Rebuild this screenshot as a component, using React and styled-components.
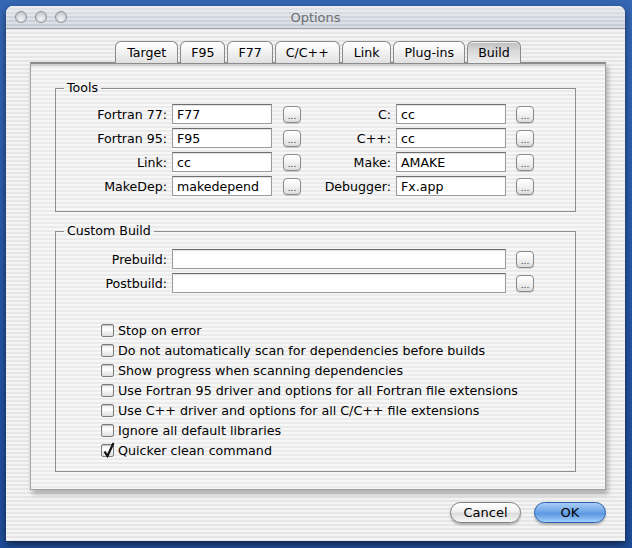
import styled, { createGlobalStyle } from 'styled-components';

const GlobalStyle = createGlobalStyle`
  html, body {
    margin: 0;
    padding: 0;
    background: #2a5aa6;
  }
  body {
    font-family: "DejaVu Sans", "Liberation Sans", sans-serif;
    font-size: 12px;
    color: #000;
  }
`;

const Desktop = styled.div`
  width: 632px;
  height: 548px;
  box-sizing: border-box;
  padding: 6px 7px 7px 6px;
  background: linear-gradient(180deg, #3566b3 0%, #2656a5 50%, #1f4c98 100%);
`;

const Window = styled.div`
  width: 619px;
  height: 535px;
  display: flex;
  flex-direction: column;
  border-radius: 7px 7px 0 0;
  overflow: hidden;
  box-shadow: 0 3px 7px rgba(0, 0, 0, 0.55);
  background: repeating-linear-gradient(180deg, #f4f4f4 0 2px, #e6e6e6 2px 4px);
`;

const TitleBar = styled.div`
  height: 22px;
  flex: none;
  display: flex;
  align-items: center;
  position: relative;
  border-bottom: 1px solid #9aa0aa;
  background:
    repeating-linear-gradient(180deg, rgba(255, 255, 255, 0.35) 0 2px, rgba(255, 255, 255, 0) 2px 4px),
    linear-gradient(180deg, #e2e5ea 0%, #cfd4dc 55%, #c3c9d3 100%);
`;

const Lights = styled.div`
  display: flex;
  gap: 8px;
  padding-left: 9px;
`;

const Light = styled.span`
  width: 12px;
  height: 12px;
  border-radius: 50%;
  box-sizing: border-box;
  border: 1px solid #8e939b;
  background: radial-gradient(circle at 50% 70%, #f4f5f7 0%, #d3d6db 55%, #b5b9c0 100%);
`;

const Title = styled.div`
  position: absolute;
  left: 0;
  right: 0;
  text-align: center;
  font-size: 13px;
  color: #6b6e73;
  pointer-events: none;
`;

const Body = styled.div`
  flex: 1;
  display: flex;
  flex-direction: column;
  padding: 12px 19px 0 24px;
`;

const TabRow = styled.div`
  display: flex;
  justify-content: center;
  gap: 2px;
  height: 22px;
  position: relative;
  z-index: 1;
  margin-bottom: -1px;
`;

const Tab = styled.div`
  height: 22px;
  box-sizing: border-box;
  padding: 0 ${p => p.$pad}px;
  display: flex;
  align-items: center;
  border: 1px solid #8a8a8a;
  border-bottom: none;
  border-radius: 6px 6px 0 0;
  font-size: 12.6px;
  background: ${p => p.$active
    ? 'linear-gradient(180deg, #bdbdbd 0%, #d8d8d8 40%, #ececec 100%)'
    : 'linear-gradient(180deg, #ffffff 0%, #f3f3f3 45%, #e0e0e0 100%)'};
  box-shadow: inset 0 1px 0 rgba(255, 255, 255, 0.8);
`;

const Panel = styled.div`
  box-sizing: border-box;
  height: 428px;
  padding: 16px 29px 0 24px;
  border: 1px solid #a0a0a0;
  border-top: 2px solid #8c8c8c;
  box-shadow: 2px 4px 5px rgba(0, 0, 0, 0.28), inset 0 4px 0 -2px #cfcfcf;
  background: repeating-linear-gradient(180deg, #f7f7f7 0 2px, #ebebeb 2px 4px);
  display: flex;
  flex-direction: column;
  gap: 11px;
`;

const Group = styled.fieldset`
  margin: 0;
  padding: ${p => p.$pt}px 0 ${p => p.$pb}px 0;
  border: 1px solid #8e8e8e;
  min-width: 0;
`;

const Legend = styled.legend`
  margin-left: 8px;
  padding: 0 3px;
  line-height: 16px;
  font-size: 12.6px;
`;

const Rows = styled.div`
  display: flex;
  flex-direction: column;
  gap: 4px;
`;

const Row = styled.div`
  display: flex;
  align-items: center;
  height: 20px;
`;

const Label = styled.span`
  width: ${p => p.$w}px;
  box-sizing: border-box;
  padding-right: 5px;
  text-align: right;
  white-space: nowrap;
  font-size: 12.6px;
`;

const TextField = styled.div`
  width: ${p => p.$w}px;
  height: 20px;
  box-sizing: border-box;
  border: 1px solid #9b9b9b;
  border-top-color: #6e6e6e;
  box-shadow: inset 0 1px 1px rgba(0, 0, 0, 0.12);
  background: #fff;
  padding-left: 4px;
  display: flex;
  align-items: center;
  font-size: 12.6px;
`;

const Browse = styled.div`
  width: 18px;
  height: 17px;
  box-sizing: border-box;
  margin-left: ${p => p.$ml}px;
  border: 1px solid #8a8a8a;
  border-radius: 4px;
  background: linear-gradient(180deg, #ffffff 0%, #f2f2f2 50%, #dcdcdc 100%);
  box-shadow: 0 1px 1px rgba(0, 0, 0, 0.15);
  display: flex;
  align-items: flex-end;
  justify-content: center;
  font-size: 9px;
  line-height: 11px;
  color: #333;
`;

const Checks = styled.div`
  display: flex;
  flex-direction: column;
  margin: 27px 0 0 45px;
`;

const CheckRow = styled.div`
  height: 20px;
  display: flex;
  align-items: center;
  gap: 4px;
  font-size: 12.7px;
  white-space: nowrap;
`;

const Box = styled.span`
  position: relative;
  width: 13px;
  height: 13px;
  box-sizing: border-box;
  border: 1px solid #7b7b7b;
  border-radius: 2px;
  background: linear-gradient(180deg, #f0f0f0 0%, #ffffff 40%, #dedede 100%);
  box-shadow: inset 0 1px 1px rgba(0, 0, 0, 0.2);
`;

const Tick = styled.svg`
  position: absolute;
  left: 0;
  top: -4px;
`;

const Footer = styled.div`
  display: flex;
  justify-content: flex-end;
  gap: 13px;
  margin-top: 12px;
`;

const Pill = styled.div`
  width: ${p => p.$w}px;
  height: 21px;
  box-sizing: border-box;
  border-radius: 11px;
  display: flex;
  align-items: center;
  justify-content: center;
  font-size: 13px;
  border: 1px solid ${p => p.$primary ? '#2c5fae' : '#7d7d7d'};
  background: ${p => p.$primary
    ? 'linear-gradient(180deg, #a9cdf5 0%, #6ea6e8 45%, #5b97e2 55%, #9fd0fb 100%)'
    : 'linear-gradient(180deg, #ffffff 0%, #f0f0f0 45%, #dcdcdc 55%, #f7f7f7 100%)'};
  box-shadow: 0 2px 2px rgba(0, 0, 0, 0.25);
`;

const tabs = [
  ['Target', 11], ['F95', 10], ['F77', 10], ['C/C++', 10],
  ['Link', 11], ['Plug-ins', 10], ['Build', 10],
];

const tools = [
  ['Fortran 77:', 'F77', 'C:', 'cc'],
  ['Fortran 95:', 'F95', 'C++:', 'cc'],
  ['Link:', 'cc', 'Make:', 'AMAKE'],
  ['MakeDep:', 'makedepend', 'Debugger:', 'Fx.app'],
];

const options = [
  ['Stop on error', false],
  ['Do not automatically scan for dependencies before builds', false],
  ['Show progress when scanning dependencies', false],
  ['Use Fortran 95 driver and options for all Fortran file extensions', false],
  ['Use C++ driver and options for all C/C++ file extensions', false],
  ['Ignore all default libraries', false],
  ['Quicker clean command', true],
];

const Check = ({ label, checked }) => (
  <CheckRow>
    <Box>
      {checked && (
        <Tick width="15" height="17" viewBox="0 0 15 17">
          <path d="M2.5 10.5 L5.5 15 L11.5 2" fill="none" stroke="#111" strokeWidth="2.2" />
        </Tick>
      )}
    </Box>
    {label}
  </CheckRow>
);

export default function App() {
  return (
    <Desktop>
      <GlobalStyle />
      <Window>
        <TitleBar>
          <Lights>
            <Light />
            <Light />
            <Light />
          </Lights>
          <Title>Options</Title>
        </TitleBar>
        <Body>
          <TabRow>
            {tabs.map(([t, pad]) => (
              <Tab key={t} $pad={pad} $active={t === 'Build'}>{t}</Tab>
            ))}
          </TabRow>
          <Panel>
            <Group $pt={8} $pb={15}>
              <Legend>Tools</Legend>
              <Rows>
                {tools.map(([l1, v1, l2, v2]) => (
                  <Row key={l1}>
                    <Label $w={116}>{l1}</Label>
                    <TextField $w={100}>{v1}</TextField>
                    <Browse $ml={11}>...</Browse>
                    <Label $w={95}>{l2}</Label>
                    <TextField $w={110}>{v2}</TextField>
                    <Browse $ml={10}>...</Browse>
                  </Row>
                ))}
              </Rows>
            </Group>
            <Group $pt={10} $pb={11}>
              <Legend>Custom Build</Legend>
              <Rows>
                {['Prebuild:', 'Postbuild:'].map(l => (
                  <Row key={l}>
                    <Label $w={116}>{l}</Label>
                    <TextField $w={334} />
                    <Browse $ml={10}>...</Browse>
                  </Row>
                ))}
              </Rows>
              <Checks>
                {options.map(([l, c]) => (
                  <Check key={l} label={l} checked={c} />
                ))}
              </Checks>
            </Group>
          </Panel>
          <Footer>
            <Pill $w={71}>Cancel</Pill>
            <Pill $w={72} $primary>OK</Pill>
          </Footer>
        </Body>
      </Window>
    </Desktop>
  );
}
